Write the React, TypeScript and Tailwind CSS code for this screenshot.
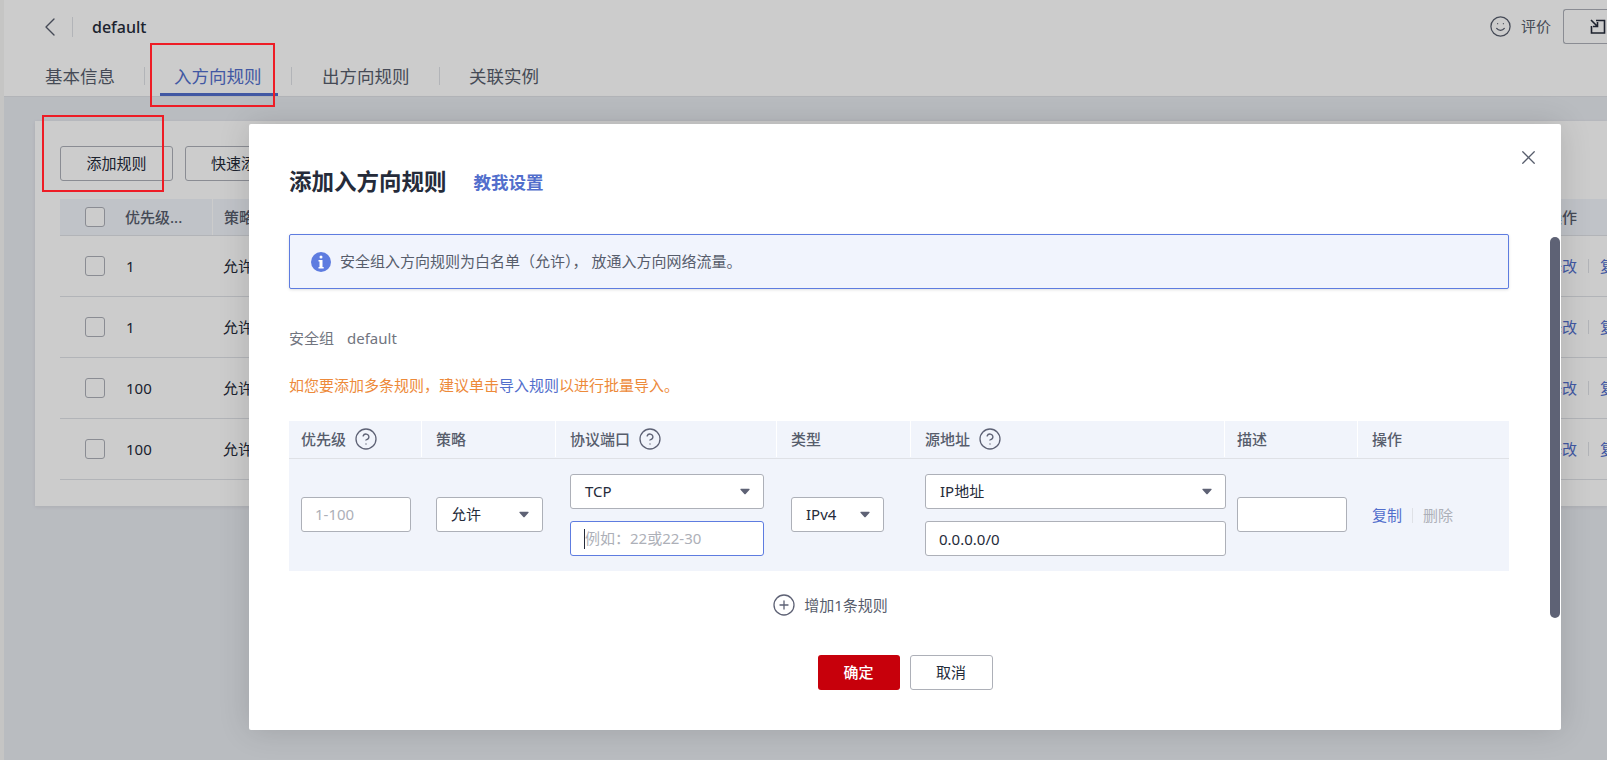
import { ChevronLeft, CircleHelp, CirclePlus, Smile, X } from "lucide-react";

const rows = ["1", "1", "100", "100"];

const Caret = () => (
  <svg width="10" height="7" viewBox="0 0 11 7" className="shrink-0">
    <path d="M1 0.5h9a.6.6 0 0 1 .45 1L6 6.4a.7.7 0 0 1-1 0L.55 1.5A.6.6 0 0 1 1 .5z" fill="#5e6275" />
  </svg>
);

const Help = () => <CircleHelp size={24} strokeWidth={1.3} className="text-[#5e6275]" />;

const Select = ({ label, className }: { label: string; className: string }) => (
  <div className={`flex h-[35px] items-center justify-between rounded-[3px] border border-[#adb0b8] bg-white pl-[14px] pr-[13px] text-[15px] text-[#252b3a] ${className}`}>
    <span>{label}</span>
    <Caret />
  </div>
);

const BackgroundPage = () => (
  <div className="flex h-[760px] w-[1607px] overflow-hidden bg-[#e8ebf1]">
    <div className="h-full w-[4px] shrink-0 bg-[#f7f7f5]" />
    <div className="min-w-0 flex-1">
      <header className="h-[97px] border-b border-[#dfe1e6] bg-white">
        <div className="flex h-[53px] items-center pl-[30px]">
          <ChevronLeft size={32} strokeWidth={1} className="text-[#575d6c]" />
          <div className="ml-[6px] h-[20px] w-px bg-[#dfe1e6]" />
          <span className="ml-[19px] text-[16px] font-medium text-[#252b3a]">default</span>
          <div className="ml-auto flex items-center">
            <Smile size={23} strokeWidth={1.3} className="text-[#575d6c]" />
            <span className="ml-[9px] text-[15px] text-[#575d6c]">评价</span>
            <div className="ml-[12px] flex h-[35px] w-[44px] items-center rounded-l-[3px] border border-r-0 border-[#adb0b8] pl-[26px]">
              <svg width="16" height="15" viewBox="0 0 16 15" fill="none" stroke="#252b3a" strokeWidth="1.6" className="shrink-0">
                <path d="M6 1.500h8.500v12.500h-13V7" />
                <path d="M1 1l6 6M7.500 3v4.500h-4.500" />
              </svg>
            </div>
          </div>
        </div>
        <div className="flex h-[43px] items-start pl-[41px] text-[17.5px] leading-[46px] text-[#575d6c]">
          <span className="w-[99px]">基本信息</span>
          <div className="mt-[14px] h-[18px] w-px bg-[#dfe1e6]" />
          <div className="ml-[15px] h-[43px] w-[118px] border-b-[3px] border-[#526ecc] pl-[14px] text-[#526ecc]">入方向规则</div>
          <div className="ml-[13px] mt-[14px] h-[18px] w-px bg-[#dfe1e6]" />
          <span className="ml-[30px] w-[117px]">出方向规则</span>
          <div className="mt-[14px] h-[18px] w-px bg-[#dfe1e6]" />
          <span className="ml-[29px]">关联实例</span>
        </div>
      </header>
      <main className="ml-[31px] mt-[24px] h-[385px] bg-white pl-[25px] pt-[25px] shadow-[0_1px_4px_rgba(0,0,0,0.08)]">
        <div className="flex gap-[12px] text-[15px] text-[#252b3a]">
          <div className="flex h-[35px] w-[113px] items-center justify-center rounded-[3px] border border-[#adb0b8]">添加规则</div>
          <div className="flex h-[35px] w-[112px] items-center justify-center rounded-[3px] border border-[#adb0b8]">快速添加</div>
        </div>
        <div className="mt-[18px] flex h-[37px] items-center border-b border-[#dfe1e6] bg-[#f1f4fb] text-[15px] font-medium text-[#575d6c]">
          <div className="w-[25px]" />
          <div className="h-[20px] w-[20px] rounded-[3px] border border-[#adb0b8] bg-white" />
          <span className="ml-[20px] w-[87px]">优先级...</span>
          <div className="h-full w-px bg-white" />
          <span className="ml-[11px]">策略</span>
          <span className="ml-auto w-[60px]">操作</span>
        </div>
        {rows.map((row, index) => (
          <div key={index} className="flex h-[61px] items-center border-b border-[#dfe1e6] text-[15px] text-[#252b3a]">
            <div className="w-[25px]" />
            <div className="h-[20px] w-[20px] rounded-[3px] border border-[#adb0b8] bg-white" />
            <span className="ml-[21px] w-[97px]">{row}</span>
            <span>允许</span>
            <div className="ml-auto flex w-[60px] items-center whitespace-nowrap text-[#526ecc]">
              <span className="shrink-0">修改</span>
              <div className="mx-[11px] h-[14px] w-px shrink-0 bg-[#dfe1e6]" />
              <span className="shrink-0">复制</span>
            </div>
          </div>
        ))}
      </main>
    </div>
  </div>
);

const AddRuleDialog = () => (
  <div className="absolute left-[249px] top-[124px] h-[606px] w-[1312px] rounded-[2px] bg-white pl-[40px] pr-[52px] pt-[42px] shadow-[0_0_32px_rgba(0,0,0,0.14)]">
    <X size={23} strokeWidth={1.3} className="absolute right-[21px] top-[22px] text-[#575d6c]" />
    <div className="absolute right-[1px] top-[113px] h-[381px] w-[10px] rounded-full bg-[#5e6275]" />

    <div className="flex h-[32px] items-center">
      <span className="text-[22.5px] font-semibold text-[#252b3a]">添加入方向规则</span>
      <span className="ml-[27px] text-[17.500px] font-bold text-[#526ecc]">教我设置</span>
    </div>

    <div className="mt-[36px] flex h-[55px] items-center rounded-[2px] border border-[#5e7ce0] bg-[#f1f4fd] pl-[21px] text-[15px] text-[#575d6c] shadow-[0_1px_3px_rgba(0,0,0,0.12)]">
      <svg width="20" height="20" viewBox="0 0 20 20" className="shrink-0">
        <circle cx="10" cy="10" r="10" fill="#5e7ce0" />
        <rect x="8.500" y="3.500" width="3" height="3" rx="1.500" fill="#fff" />
        <path d="M7.500 8h4v7h1.200v1.500H7.500V15h1V9.500h-1z" fill="#fff" />
      </svg>
      <span className="ml-[9px]">安全组入方向规则为白名单（允许）， 放通入方向网络流量。</span>
    </div>

    <div className="mt-[39px] flex h-[20px] items-center text-[15px] text-[#71757f]">
      <span>安全组</span>
      <span className="ml-[13px]">default</span>
    </div>

    <div className="mt-[27px] h-[20px] text-[15px] leading-[20px] text-[#ed8a3a]">
      如您要添加多条规则，建议单击<span className="text-[#526ecc]">导入规则</span>以进行批量导入。
    </div>

    <div className="mt-[26px] bg-[#f1f4fb] text-[15px]">
      <div className="grid h-[38px] grid-cols-[133px_134px_221px_134px_314px_133px_151px] border-b border-[#dfe1e6] pb-px font-medium text-[#575d6c]">
        <div className="flex items-center gap-[8px] border-r border-white pl-[12px]">优先级<Help /></div>
        <div className="flex items-center border-r border-white pl-[14px]">策略</div>
        <div className="flex items-center gap-[8px] border-r border-white pl-[14px]">协议端口<Help /></div>
        <div className="flex items-center border-r border-white pl-[14px]">类型</div>
        <div className="flex items-center gap-[8px] border-r border-white pl-[14px]">源地址<Help /></div>
        <div className="flex items-center border-r border-white pl-[12px]">描述</div>
        <div className="flex items-center pl-[14px]">操作</div>
      </div>
      <div className="grid h-[112px] grid-cols-[133px_134px_221px_134px_314px_133px_151px] items-center text-[#252b3a]">
        <div className="mb-[2px] pl-[12px]">
          <input readOnly placeholder="1-100" className="block h-[35px] w-[110px] rounded-[3px] border border-[#adb0b8] bg-white pl-[13px] outline-none placeholder:text-[#adb0b8]" />
        </div>
        <div className="mb-[2px] pl-[14px]">
          <Select label="允许" className="w-[107px]" />
        </div>
        <div className="flex flex-col gap-[12px] pl-[14px]">
          <Select label="TCP" className="w-[194px]" />
          <div className="flex h-[35px] w-[194px] items-center rounded-[3px] border border-[#5e7ce0] bg-white pl-[13px] text-[#adb0b8]">
            <div className="h-[20px] w-px bg-[#252b3a]" />
            <span>例如：22或22-30</span>
          </div>
        </div>
        <div className="mb-[2px] pl-[14px]">
          <Select label="IPv4" className="w-[93px]" />
        </div>
        <div className="flex flex-col gap-[12px] pl-[14px]">
          <Select label="IP地址" className="w-[301px]" />
          <input readOnly value="0.0.0.0/0" className="h-[35px] w-[301px] rounded-[3px] border border-[#adb0b8] bg-white pl-[13px] outline-none" />
        </div>
        <div className="mb-[2px] pl-[12px]">
          <input readOnly className="block h-[35px] w-[110px] rounded-[3px] border border-[#adb0b8] bg-white outline-none" />
        </div>
        <div className="flex items-center pl-[14px]">
          <span className="text-[#526ecc]">复制</span>
          <div className="mx-[10px] h-[15px] w-px bg-[#dfe1e6]" />
          <span className="text-[#adb0b8]">删除</span>
        </div>
      </div>
    </div>

    <div className="mt-[24px] flex h-[20px] items-center justify-center pr-[138px] text-[15px] text-[#575d6c]">
      <CirclePlus size={24} strokeWidth={1.3} className="text-[#5e6275]" />
      <span className="ml-[8px]">增加1条规则</span>
    </div>

    <div className="mt-[40px] flex justify-center gap-[10px] pl-[12px] text-[15px]">
      <div className="flex h-[35px] w-[82px] items-center justify-center rounded-[3px] bg-[#c7000b] font-medium text-white">确定</div>
      <div className="flex h-[35px] w-[83px] items-center justify-center rounded-[3px] border border-[#adb0b8] bg-white text-[#252b3a]">取消</div>
    </div>
  </div>
);

export default function App() {
  return (
    <div className="relative h-[760px] w-[1607px] overflow-hidden font-['Noto_Sans','Noto_Sans_CJK_SC',sans-serif]">
      <BackgroundPage />
      <div className="absolute inset-0 bg-black/20" />
      <AddRuleDialog />
      {/* annotation boxes drawn on the screenshot */}
      <div className="absolute left-[42px] top-[115px] h-[77px] w-[122px] border-2 border-[#ee1c25]" />
      <div className="absolute left-[150px] top-[43px] h-[64px] w-[125px] border-2 border-[#ee1c25]" />
    </div>
  );
}
